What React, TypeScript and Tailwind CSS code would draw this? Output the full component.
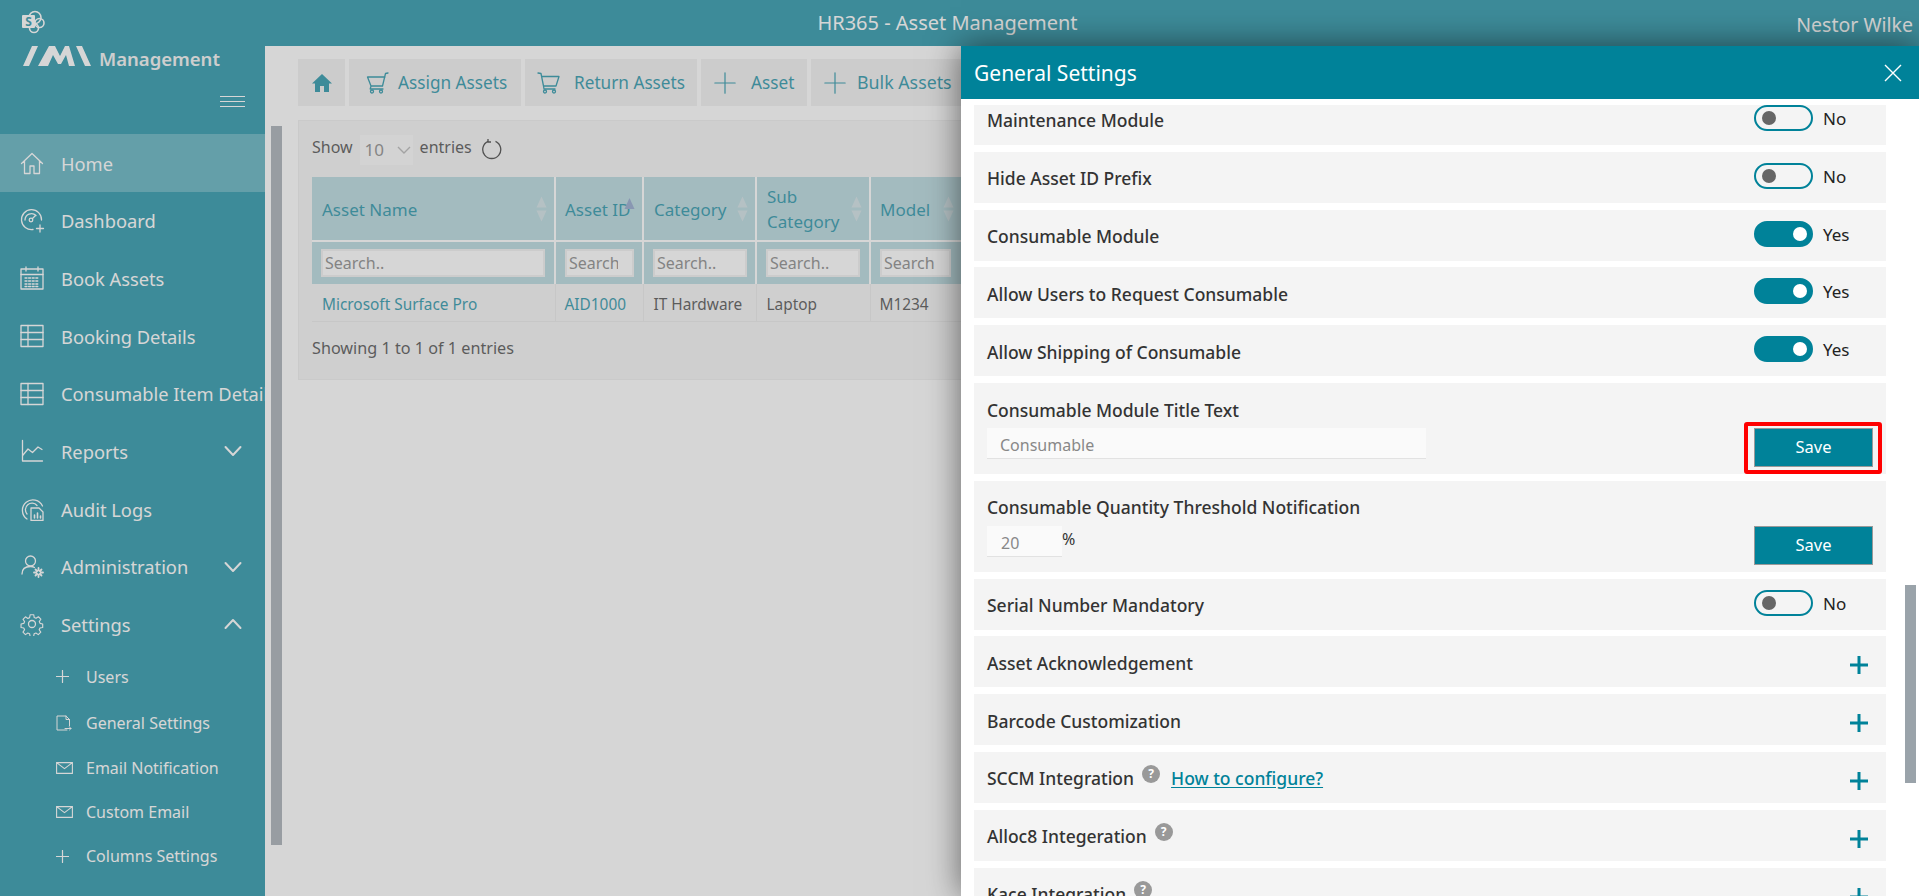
import React from "react";

function Svg({ children, w = 24, h = 24, vb = "0 0 24 24", sw = 1.3 }: { children: React.ReactNode; w?: number; h?: number; vb?: string; sw?: number }) {
  return (
    <svg width={w} height={h} viewBox={vb} fill="none" stroke="currentColor" strokeWidth={sw} strokeLinecap="round" strokeLinejoin="round" className="shrink-0">
      {children}
    </svg>
  );
}

const IHome = () => (
  <Svg>
    <path d="M1.5 12.5 12 2.5l10.5 10M4.5 10v12.5h5.5V15h4v7.5h5.5V10" />
  </Svg>
);
const IDash = () => (
  <Svg w={25} h={25} vb="0 0 25 25">
    <path d="M13 21.5A10 10 0 1 1 21.5 12" />
    <path d="M5 12a6.5 6.5 0 0 1 11-4.5" />
    <circle cx="11" cy="12" r="1.8" />
    <path d="m12.5 10.5 3-3M20 17v7M16.5 20.5h7" />
  </Svg>
);
const ICal = () => (
  <Svg w={24} h={24}>
    <rect x="1" y="3" width="22" height="20" />
    <path d="M1 8.5h22M6 1v4M18 1v4" />
    <path d="M5 12h14M5 15h14M5 18h14M5 20.5h14" strokeDasharray="2 1.6" />
  </Svg>
);
const IGrid = () => (
  <Svg>
    <rect x="1" y="1.5" width="22" height="21" />
    <path d="M1 8.5h22M1 15.5h22M8 1.5v21" />
  </Svg>
);
const IChart = () => (
  <Svg>
    <path d="M2.5 1.5v20.5h20" />
    <path d="M3 16l5-6 4.5 3.5L18 8l4 2.5" />
  </Svg>
);
const IAudit = () => (
  <Svg>
    <path d="M7 22A10.5 10.5 0 1 1 22.5 9" />
    <path d="M7 17a6.5 6.5 0 1 1 10-8.500" />
    <path d="M11 11h8l4 4v8.500H11z" />
    <path d="M14.500 21v-3M17.500 21v-5M20.500 21v-2" strokeWidth={1.6} />
  </Svg>
);
const IAdmin = () => (
  <Svg w={25} h={25} vb="0 0 25 25">
    <circle cx="10.500" cy="7" r="5" />
    <path d="M2 20c0-5 3.500-7.500 8.500-7.500 1.500 0 3 .3 4 1" />
    <circle cx="18.500" cy="18.500" r="2" />
    <path d="M18.500 14v2M18.500 21v2M14 18.500h2M21 18.500h2M15.500 15.500l1.500 1.500M20 20l1.500 1.500M15.500 21.500 17 20M20 17l1.500-1.500" strokeWidth={1.8} />
  </Svg>
);
const IGear = () => (
  <Svg>
    <circle cx="12" cy="12" r="3.500" />
    <path d="M10 1.500h4l.6 3.200 2 .9 2.700-1.800 2.800 2.800-1.800 2.700.9 2 3 .7v4l-3.100.6-.9 2 1.800 2.700-2.800 2.800-2.700-1.800-2 .8-.6 3.100h-4l-.6-3.100-2-.8-2.700 1.800-2.800-2.800 1.800-2.700-.9-2-3.100-.6v-4l3.100-.6.900-2-1.800-2.700 2.800-2.800 2.700 1.800 2-.9z" transform="translate(1.400 1.400) scale(.88)" />
  </Svg>
);
const IPlusThin = ({ s = 13 }: { s?: number }) => (
  <Svg w={s} h={s} vb="0 0 13 13" sw={s > 13 ? 0.7 : 1.2}>
    <path d="M6.500 .5v12M.5 6.500h12" />
  </Svg>
);
const IFile = () => (
  <Svg w={16} h={16} vb="0 0 16 16" sw={1}>
    <path d="M11 15H1V1h9l3.500 3.500V11M10 1v3.500h3.500M9 13.500h6m-1.500-1.500 1.500 1.500-1.500 1.500" />
  </Svg>
);
const IMail = () => (
  <Svg w={17} h={12} vb="0 0 17 12" sw={1.1}>
    <path d="M.6.600h15.800v10.800H.6zM.6.600l7.900 6 7.900-6" />
  </Svg>
);
const IChevron = ({ up = false }: { up?: boolean }) => (
  <Svg w={18} h={12} vb="0 0 18 12" sw={2}>
    <path d={up ? "M1.500 10 9 2l7.500 8" : "M1.500 2 9 10l7.500-8"} />
  </Svg>
);
const ICart = ({ tilt = false }: { tilt?: boolean }) => (
  <Svg w={23} h={22} vb="0 0 23 22" sw={1.3}>
    {tilt ? (
      <path d="M22 1l-2.500.5L16.500 14H5L1.500 5H19M5 14l-.8 3H17" />
    ) : (
      <path d="M1 1l3 .5L6.500 14H19l3-9.500H5M6.500 14l.5 3h11" />
    )}
    <circle cx={tilt ? 6 : 8} cy="19.500" r="1.500" />
    <circle cx={tilt ? 15 : 17} cy="19.500" r="1.500" />
  </Svg>
);

const SortArrows = ({ active = false }: { active?: boolean }) =>
  active ? (
    <svg width="11" height="11" viewBox="0 0 11 11" className="absolute right-[7px] top-[21px]">
      <path d="M5.500 0 10.500 11H.5z" fill="#7f96c4" />
    </svg>
  ) : (
    <svg width="11" height="25" viewBox="0 0 11 25" className="absolute right-[7px] top-1/2 -translate-y-1/2">
      <path d="M5.500 0 10.500 11H.5zM5.500 25 .5 14h10z" fill="#c9dde1" />
    </svg>
  );

function Item({ icon, label, chevron, active }: { icon: React.ReactNode; label: string; chevron?: "up" | "down"; active?: boolean }) {
  return (
    <div className={`flex h-[57.700px] items-center overflow-hidden whitespace-nowrap pl-[20px] pr-[23px] text-[18.300px] ${active ? "bg-[#41a3b5]" : ""}`}>
      <span className="flex w-[41px] shrink-0 items-center">{icon}</span>
      <span className="flex-1 pt-[1px]">{label}</span>
      {chevron && <IChevron up={chevron === "up"} />}
    </div>
  );
}

function Sub({ icon, label, h }: { icon: React.ReactNode; label: string; h: string }) {
  return (
    <div className={`flex items-center whitespace-nowrap pl-[55px] text-[16px] ${h}`}>
      <span className="flex w-[31px] shrink-0 items-center pl-[1px]">{icon}</span>
      <span>{label}</span>
    </div>
  );
}

function Sidebar() {
  return (
    <aside className="w-[265px] shrink-0 overflow-hidden bg-[#008299] text-white">
      <div className="h-[88px]">
        <div className="flex items-start pl-[23px]">
          <svg width="68" height="20" viewBox="0 0 68 20" className="shrink-0" fill="#fff">
            <path d="M9 0h6L6 20H0zM15 20 26 0h6l5 10 5-10h4l6 20h-6l-3-11-5 9h-3l-5-9-5 11zM53 0h6l9 20h-6z" />
          </svg>
          <span className="ml-[8px] mt-[-1px] text-[18.500px] leading-[28px] font-semibold text-[#f2f2f2]">Management</span>
        </div>
        <div className="ml-[220px] mt-[23px] flex w-[25px] flex-col gap-[4px]">
          <div className="h-px bg-white" />
          <div className="h-px bg-white" />
          <div className="h-px bg-white" />
        </div>
      </div>
      <Item active icon={<IHome />} label="Home" />
      <Item icon={<IDash />} label="Dashboard" />
      <Item icon={<ICal />} label="Book Assets" />
      <Item icon={<IGrid />} label="Booking Details" />
      <Item icon={<IGrid />} label="Consumable Item Details" />
      <Item icon={<IChart />} label="Reports" chevron="down" />
      <Item icon={<IAudit />} label="Audit Logs" />
      <Item icon={<IAdmin />} label="Administration" chevron="down" />
      <Item icon={<IGear />} label="Settings" chevron="up" />
      <div className="text-white">
        <Sub h="h-[47px]" icon={<IPlusThin />} label="Users" />
        <Sub h="h-[46px]" icon={<IFile />} label="General Settings" />
        <Sub h="h-[44px]" icon={<IMail />} label="Email Notification" />
        <Sub h="h-[44px]" icon={<IMail />} label="Custom Email" />
        <Sub h="h-[44px]" icon={<IPlusThin />} label="Columns Settings" />
      </div>
    </aside>
  );
}

function ToolBtn({ icon, label, cls }: { icon: React.ReactNode; label: string; cls: string }) {
  return (
    <div className={`flex h-[47px] shrink-0 items-center bg-[#eeeeee] text-[17.200px] text-[#008299] ${cls}`}>
      {icon}
      <span>{label}</span>
    </div>
  );
}

function Th({ children, active, cls = "" }: { children: React.ReactNode; active?: boolean; cls?: string }) {
  return (
    <th className={`relative border-r-2 border-b-2 border-white pl-[10px] pr-[9px] text-left align-middle text-[17px] leading-[25px] font-normal text-[#008299] ${cls}`}>
      {children}
      <SortArrows active={active} />
    </th>
  );
}

function Filter({ w }: { w: string }) {
  return (
    <td className="border-r-2 border-white px-[9px] align-middle">
      <input readOnly placeholder="Search.." className={`block h-[28px] border-2 border-[#eeeeee] bg-white pl-[2px] pr-[14px] text-[16px] outline-none placeholder:text-[#757575] ${w}`} />
    </td>
  );
}

function Main() {
  return (
    <main className="flex min-w-0 flex-1 bg-white">
      <div className="ml-[6px] mt-[80px] h-[719px] w-[11px] shrink-0 bg-[#98a0a8]" />
      <div className="ml-[16px] min-w-0 flex-1 overflow-hidden pt-[13px]">
        <div className="flex gap-[4px]">
          <div className="flex h-[47px] w-[47px] shrink-0 items-center justify-center bg-[#eeeeee] text-[#008299]">
            <svg width="20" height="18" viewBox="0 0 20 18" fill="currentColor">
              <path d="M10 0 0 9.500h3V18h5v-6h4v6h5V9.500h3z" />
            </svg>
          </div>
          <ToolBtn cls="w-[172px] pl-[17px] gap-[9px]" icon={<ICart tilt />} label="Assign Assets" />
          <ToolBtn cls="w-[172px] pl-[12px] gap-[14px]" icon={<ICart />} label="Return Assets" />
          <ToolBtn cls="w-[106px] pl-[13px] gap-[15px]" icon={<IPlusThin s={22} />} label="Asset" />
          <ToolBtn cls="w-[170px] pl-[13px] gap-[11px] text-[17.800px]" icon={<IPlusThin s={22} />} label="Bulk Assets" />
        </div>
        <div className="mt-[14px] h-[260px] border border-[#ebebeb] bg-[#f3f3f3] px-[13px]">
          <div className="flex h-[56px] items-center text-[16px] text-[#333]">
            <span className="mb-[4px]">Show</span>
            <span className="ml-[7px] mt-[2px] flex h-[30px] w-[53px] items-center justify-between bg-[#fafafa] pl-[5px] pr-[2px] text-[17px] text-[#777]">
              10
              <svg width="14" height="8" viewBox="0 0 14 8" fill="none" stroke="#aaa" strokeWidth="1.400"><path d="m1 1 6 6 6-6" /></svg>
            </span>
            <span className="mb-[4px] ml-[7px]">entries</span>
            <svg width="21" height="22" viewBox="0 0 21 22" fill="none" stroke="#222" strokeWidth="1.300" className="mb-[1px] ml-[10px]">
              <path d="M13.500 3.300a9 9 0 1 1-7.500 0" />
              <path d="M6 1v3h3" />
            </svg>
          </div>
          <table className="w-[900px] table-fixed border-collapse">
            <colgroup>
              <col className="w-[243px]" />
              <col className="w-[88px]" />
              <col className="w-[113px]" />
              <col className="w-[114px]" />
              <col className="w-[342px]" />
            </colgroup>
            <thead>
              <tr className="h-[64px] bg-[#abd2d9]">
                <Th cls="pt-[2px]">Asset Name</Th>
                <Th active cls="!pl-[9px] pt-[2px]">Asset ID</Th>
                <Th cls="pt-[2px]">Category</Th>
                <Th>Sub Category</Th>
                <th className="relative border-b-2 border-white px-[9px] pt-[2px] text-left text-[17px] font-normal text-[#008299]">
                  Model
                  <svg width="11" height="25" viewBox="0 0 11 25" className="absolute left-[72px] top-1/2 -translate-y-1/2">
                    <path d="M5.500 0 10.500 11H.5zM5.500 25 .5 14h10z" fill="#c9dde1" />
                  </svg>
                </th>
              </tr>
              <tr className="h-[43px] bg-[#abd2d9]">
                <Filter w="w-[224px]" />
                <Filter w="w-[69px]" />
                <Filter w="w-[94px]" />
                <Filter w="w-[94px]" />
                <td className="px-[9px]">
                  <input readOnly placeholder="Search.." className="block h-[28px] w-[71px] border-2 border-[#eeeeee] bg-white pl-[2px] pr-[14px] text-[16px] outline-none placeholder:text-[#757575]" />
                </td>
              </tr>
            </thead>
            <tbody>
              <tr className="h-[37px] border-b border-[#e6e6e6] text-[15.400px] text-[#333]">
                <td className="border-r border-[#e6e6e6] pl-[10px] pt-[4px] text-[#008299]">Microsoft Surface Pro</td>
                <td className="border-r border-[#e6e6e6] pl-[9px] pt-[4px] text-[#008299]">AID1000</td>
                <td className="border-r border-[#e6e6e6] pl-[10px] pt-[4px]">IT Hardware</td>
                <td className="border-r border-[#e6e6e6] pl-[10px] pt-[4px]">Laptop</td>
                <td className="pl-[9px] pt-[4px]">M1234</td>
              </tr>
            </tbody>
          </table>
          <div className="mt-[14px] text-[16.200px] text-[#333]">Showing 1 to 1 of 1 entries</div>
        </div>
      </div>
    </main>
  );
}

function Toggle({ on }: { on: boolean }) {
  return (
    <div className="flex items-start gap-[10px] pt-[11px] text-[17px] leading-[27px] text-[#222]">
      <div className={`flex h-[26px] w-[59px] items-center rounded-full border-2 border-[#008299] ${on ? "justify-end bg-[#008299] pr-[4px]" : "pl-[6px]"}`}>
        <div className={`h-[14px] w-[14px] rounded-full ${on ? "bg-white" : "bg-[#666]"}`} />
      </div>
      <span>{on ? "Yes" : "No"}</span>
    </div>
  );
}

function Row({ label, on, plus, children }: { label?: string; on?: boolean; plus?: boolean; children?: React.ReactNode }) {
  return (
    <div className="flex h-[51px] shrink-0 bg-[#f4f4f4] pl-[13px]">
      <div className="flex flex-1 items-center pt-[2px] text-[17.500px] font-medium text-[#333]">{children ?? label}</div>
      <div className="w-[132px] shrink-0">
        {on !== undefined && <Toggle on={on} />}
        {plus && (
          <div className="flex justify-end pr-[17px] pt-[19px] text-[#008299]">
            <Svg w={20} h={20} vb="0 0 20 20" sw={3}>
              <path d="M10 1v18M1 10h18" strokeLinecap="butt" />
            </Svg>
          </div>
        )}
      </div>
    </div>
  );
}

const Q = () => (
  <span className="mb-[8px] ml-[8px] inline-flex h-[18px] w-[18px] items-center justify-center rounded-full bg-[#999] text-[12px] font-bold text-white">?</span>
);

function SaveBtn({ mt }: { mt: string }) {
  return (
    <div className={`flex h-[39px] w-[119px] items-center justify-center border border-[#999] bg-[#008299] text-[16.500px] text-white ${mt}`}>Save</div>
  );
}

function Panel() {
  return (
    <section className="absolute bottom-0 left-[961px] right-0 top-[46px] bg-white shadow-[0_0_32px_rgba(0,0,0,0.55)]">
      <header className="flex h-[53px] items-center justify-between bg-[#008299] pl-[13px] pr-[17px] text-white">
        <h2 className="pt-[2px] text-[21px] font-normal">General Settings</h2>
        <svg width="18" height="18" viewBox="0 0 18 18" stroke="currentColor" strokeWidth="1.400"><path d="m1 1 16 16M17 1 1 17" /></svg>
      </header>
      <div className="absolute right-[3px] top-[539px] h-[198px] w-[11px] bg-[#9aa3aa]" />
      <div className="ml-[13px] mr-[33px] mt-[6px] h-[791px] overflow-hidden">
        <div className="-mt-[11px] flex flex-col gap-[6.800px]">
          <Row label="Maintenance Module" on={false} />
          <Row label="Hide Asset ID Prefix" on={false} />
          <Row label="Consumable Module" on />
          <Row label="Allow Users to Request Consumable" on />
          <Row label="Allow Shipping of Consumable" on />
          <div className="flex h-[91px] shrink-0 bg-[#f4f4f4] pl-[13px]">
            <div className="flex-1 pt-[15px]">
              <div className="text-[17.500px] leading-[24px] font-medium text-[#333]">Consumable Module Title Text</div>
              <input readOnly placeholder="Consumable" className="mt-[6px] block h-[31px] w-[439px] border-b border-[#e2e2e2] bg-[#fafafa] px-[13px] pt-[4px] text-[16px] outline-none placeholder:text-[#888]" />
            </div>
            <div className="relative w-[132px] shrink-0">
              <SaveBtn mt="mt-[45px]" />
              <span className="absolute left-[-10px] top-[39px] h-[52px] w-[138px] rounded-[3px] border-[4px] border-[#ff0000]" />
            </div>
          </div>
          <div className="flex h-[91px] shrink-0 bg-[#f4f4f4] pl-[13px]">
            <div className="flex-1 pt-[14px]">
              <div className="text-[17.500px] leading-[24px] font-medium text-[#333]">Consumable Quantity Threshold Notification</div>
              <div className="mt-[7px] flex items-start">
                <input readOnly placeholder="20" className="block h-[31px] w-[75px] border-b border-[#e2e2e2] bg-[#fafafa] px-[14px] pt-[4px] text-[16px] outline-none placeholder:text-[#888]" />
                <span className="text-[16px] leading-[26px] text-[#333]">%</span>
              </div>
            </div>
            <div className="w-[132px] shrink-0">
              <SaveBtn mt="mt-[45px]" />
            </div>
          </div>
          <Row label="Serial Number Mandatory" on={false} />
          <Row label="Asset Acknowledgement" plus />
          <Row label="Barcode Customization" plus />
          <Row plus>
            <span>SCCM Integration</span>
            <Q />
            <a className="ml-[11px] text-[#008299] underline underline-offset-2">How to configure?</a>
          </Row>
          <Row plus>
            <span>Alloc8 Integeration</span>
            <Q />
          </Row>
          <Row plus>
            <span>Kace Integration</span>
            <Q />
          </Row>
        </div>
      </div>
    </section>
  );
}

export default function App() {
  return (
    <div className="relative flex h-[896px] w-full flex-col overflow-hidden bg-white font-['Noto_Sans',sans-serif]">
      <header className="relative flex h-[46px] shrink-0 items-center justify-center bg-[#008299] pr-[24px] text-white">
        <svg width="24" height="24" viewBox="0 0 24 24" className="absolute left-[21px] top-[10px]">
          <circle cx="14" cy="7.500" r="6" fill="none" stroke="#fff" strokeWidth="1.600" />
          <circle cx="18.500" cy="13" r="4.500" fill="none" stroke="#fff" strokeWidth="1.600" />
          <circle cx="13" cy="18" r="4.500" fill="none" stroke="#fff" strokeWidth="1.600" />
          <rect x="1" y="5" width="13" height="13" rx="1" fill="#fff" />
          <text x="7.500" y="15.500" textAnchor="middle" fontSize="12" fontWeight="700" fill="#008299">S</text>
        </svg>
        <span className="text-[20px]">HR365 - Asset Management</span>
        <span className="absolute right-[6px] top-[10px] text-[19.500px]">Nestor Wilke</span>
      </header>
      <div className="flex min-h-0 flex-1">
        <Sidebar />
        <Main />
      </div>
      <div className="absolute inset-0 bg-[#999]/40" />
      <Panel />
    </div>
  );
}
